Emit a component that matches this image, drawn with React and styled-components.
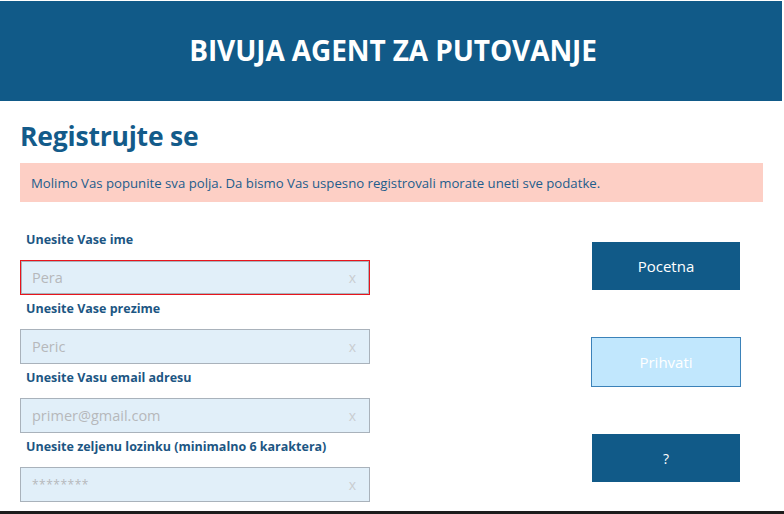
import React from "react";
import styled, { createGlobalStyle } from "styled-components";

const Global = createGlobalStyle`
  html, body { margin: 0; padding: 0; background: #ffffff; }
  body { font-family: "Open Sans", "Noto Sans", sans-serif; }
  * { box-sizing: border-box; }
`;

const Page = styled.div`
  width: 784px;
  display: flex;
  flex-direction: column;
`;

const Header = styled.header`
  flex-shrink: 0;
  height: 100px;
  margin: 1px 2px 0 0;
  background: #115a88;
  display: flex;
  align-items: center;
  justify-content: center;
`;

const Title = styled.h1`
  margin: 0 0 2px 4px;
  color: #ffffff;
  font-size: 28px;
  font-weight: 700;
  letter-spacing: -0.1px;
`;

const Main = styled.main`
  flex-shrink: 0;
  padding: 0 20px;
  display: flex;
  flex-direction: column;
`;

const Heading = styled.h2`
  margin: 17px 0 0;
  height: 45px;
  line-height: 36px;
  color: #135b8a;
  font-size: 26.5px;
  font-weight: 700;
  letter-spacing: -0.2px;
`;

const Alert = styled.div`
  height: 39px;
  display: flex;
  align-items: center;
  padding: 0 11px;
  background: #fdcfc5;
  color: #235d8c;
  font-size: 13.2px;
  margin-right: 1px;
`;

const Body = styled.div`
  display: grid;
  grid-template-columns: 350px 1fr;
  align-items: start;
  margin-top: 24px;
`;

const Fields = styled.div`
  display: flex;
  flex-direction: column;
`;

const Field = styled.div`
  display: flex;
  flex-direction: column;
`;

const Label = styled.label`
  padding: 5px 0 11px 6px;
  line-height: 18px;
  font-size: 12.5px;
  font-weight: 700;
  color: #1c5683;
`;

const InputBox = styled.div`
  height: 35px;
  display: flex;
  align-items: center;
  justify-content: space-between;
  padding: 0 13px 0 11px;
  background: #e1eff9;
  border: 1px solid ${(p) => (p.$error ? "#e8141c" : "#a9b2bb")};
  box-shadow: ${(p) => (p.$error ? "inset 0 0 0 1px #a9b2bb" : "none")};
`;

const Placeholder = styled.span`
  color: #b6b8bb;
  font-size: ${(p) => (p.$small ? "12px" : "14.5px")};
  letter-spacing: ${(p) => (p.$small ? "0.5px" : "0")};
  font-weight: 400;
`;

const Clear = styled.span`
  color: #c9cdd1;
  font-size: 14px;
`;

const Actions = styled.div`
  display: flex;
  flex-direction: column;
  align-items: flex-start;
  gap: 47px;
  padding-left: 222px;
  padding-top: 16px;
`;

const Button = styled.button`
  width: ${(p) => (p.$outlined ? "150px" : "148px")};
  height: ${(p) => (p.$outlined ? "50px" : "48px")};
  margin-left: ${(p) => (p.$outlined ? "-1px" : "0")};
  border: ${(p) => (p.$outlined ? "1px solid #3b82b9" : "none")};
  background: ${(p) => (p.$outlined ? "#c1e7fd" : "#115a88")};
  color: #ffffff;
  font-family: "Open Sans", "Noto Sans", sans-serif;
  font-size: ${(p) => (p.$small ? "14px" : "15px")};
  padding: 0;
  cursor: pointer;
`;

const Footer = styled.footer`
  margin-top: 9px;
  height: 3px;
  background: #1d1d1d;
`;

const fields = [
  { label: "Unesite Vase ime", ph: "Pera", error: true },
  { label: "Unesite Vase prezime", ph: "Peric" },
  { label: "Unesite Vasu email adresu", ph: "primer@gmail.com" },
  { label: "Unesite zeljenu lozinku (minimalno 6 karaktera)", ph: "********", small: true },
];

export default function App() {
  return (
    <Page>
      <Global />
      <Header>
        <Title>BIVUJA AGENT ZA PUTOVANJE</Title>
      </Header>
      <Main>
        <Heading>Registrujte se</Heading>
        <Alert>
          Molimo Vas popunite sva polja. Da bismo Vas uspesno registrovali morate uneti sve podatke.
        </Alert>
        <Body>
          <Fields>
            {fields.map((f) => (
              <Field key={f.label}>
                <Label>{f.label}</Label>
                <InputBox $error={f.error}>
                  <Placeholder $small={f.small}>{f.ph}</Placeholder>
                  <Clear>x</Clear>
                </InputBox>
              </Field>
            ))}
          </Fields>
          <Actions>
            <Button>Pocetna</Button>
            <Button $outlined>Prihvati</Button>
            <Button $small>?</Button>
          </Actions>
        </Body>
      </Main>
      <Footer />
    </Page>
  );
}
